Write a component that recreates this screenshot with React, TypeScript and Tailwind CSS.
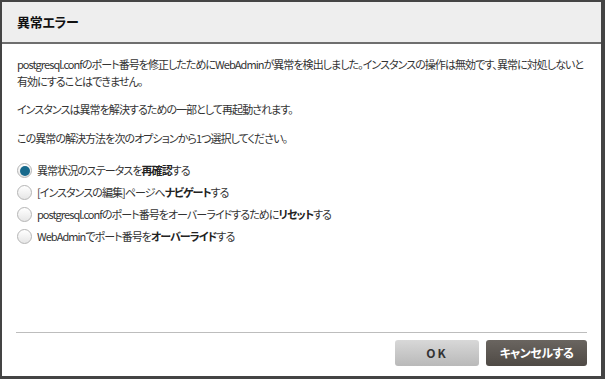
const FONT = "font-['Meiryo','Noto_Sans_CJK_JP',sans-serif] [font-feature-settings:'palt']";

const OPTIONS: { parts: [string, boolean][] }[] = [
  { parts: [['異常状況のステータスを', false], ['再確認', true], ['する', false]] },
  { parts: [['[インスタンスの編集]ページへ', false], ['ナビゲート', true], ['する', false]] },
  { parts: [['postgresql.confのポート番号をオーバーライドするために', false], ['リセット', true], ['する', false]] },
  { parts: [['WebAdminでポート番号を', false], ['オーバーライド', true], ['する', false]] },
];

function Radio({ checked }: { checked: boolean }) {
  return (
    <span className="flex h-[15px] w-[15px] shrink-0 items-center justify-center rounded-full border border-[#b5b5b5] bg-gradient-to-b from-[#ffffff] to-[#e6e6e6]">
      {checked && <span className="h-[10px] w-[10px] rounded-full bg-[#17698c]" />}
    </span>
  );
}

export default function App() {
  return (
    <div className={`h-[379px] w-[605px] bg-[#444444] pl-[2px] pt-[2px] ${FONT}`}>
      <div className="flex h-[374px] w-[599px] flex-col bg-white">
        {/* Header */}
        <div className="flex h-[42px] shrink-0 items-center border-b-2 border-[#6e6e6e] bg-[#eeeeee] px-[15px]">
          <h2 className="text-[13px] font-semibold tracking-[-0.3px] text-[#111]">異常エラー</h2>
        </div>

        {/* Body */}
        <div className="flex-1 whitespace-nowrap px-[15px] pt-[12px] text-[11px] leading-[17px] tracking-[-0.95px] text-[#333]">
          <p>
            postgresql.confのポート番号を修正したためにWebAdminが異常を検出しました。インスタンスの操作は無効です、異常に対処しないと
            <br />
            有効にすることはできません。
          </p>
          <p className="mt-[11px]">インスタンスは異常を解決するための一部として再起動されます。</p>
          <p className="mt-[12px]">この異常の解決方法を次のオプションから1つ選択してください。</p>

          <div className="mt-[15px] flex flex-col gap-[5px]">
            {OPTIONS.map((o, i) => (
              <label key={i} className="flex h-[17px] items-center gap-[5px]">
                <Radio checked={i === 0} />
                <span>
                  {o.parts.map(([t, b], j) => (
                    <span key={j} className={b ? 'font-semibold text-[#222]' : ''}>{t}</span>
                  ))}
                </span>
              </label>
            ))}
          </div>
        </div>

        {/* Footer */}
        <div className="mx-[14px] border-t border-[#bdbdbd]" />
        <div className="flex justify-end gap-[7px] px-[14px] pb-[10px] pt-[7px]">
          <button className="h-[26px] w-[84px] rounded-[3px] bg-gradient-to-b from-[#d8d8d8] to-[#b9b9b9] text-[12px] font-bold tracking-[2px] text-[#333]">
            OK
          </button>
          <button className="h-[26px] w-[101px] rounded-[3px] bg-gradient-to-b from-[#6a6560] to-[#4f4a45] text-[12px] font-bold tracking-[-0.5px] text-white">
            キャンセルする
          </button>
        </div>
      </div>
    </div>
  );
}
